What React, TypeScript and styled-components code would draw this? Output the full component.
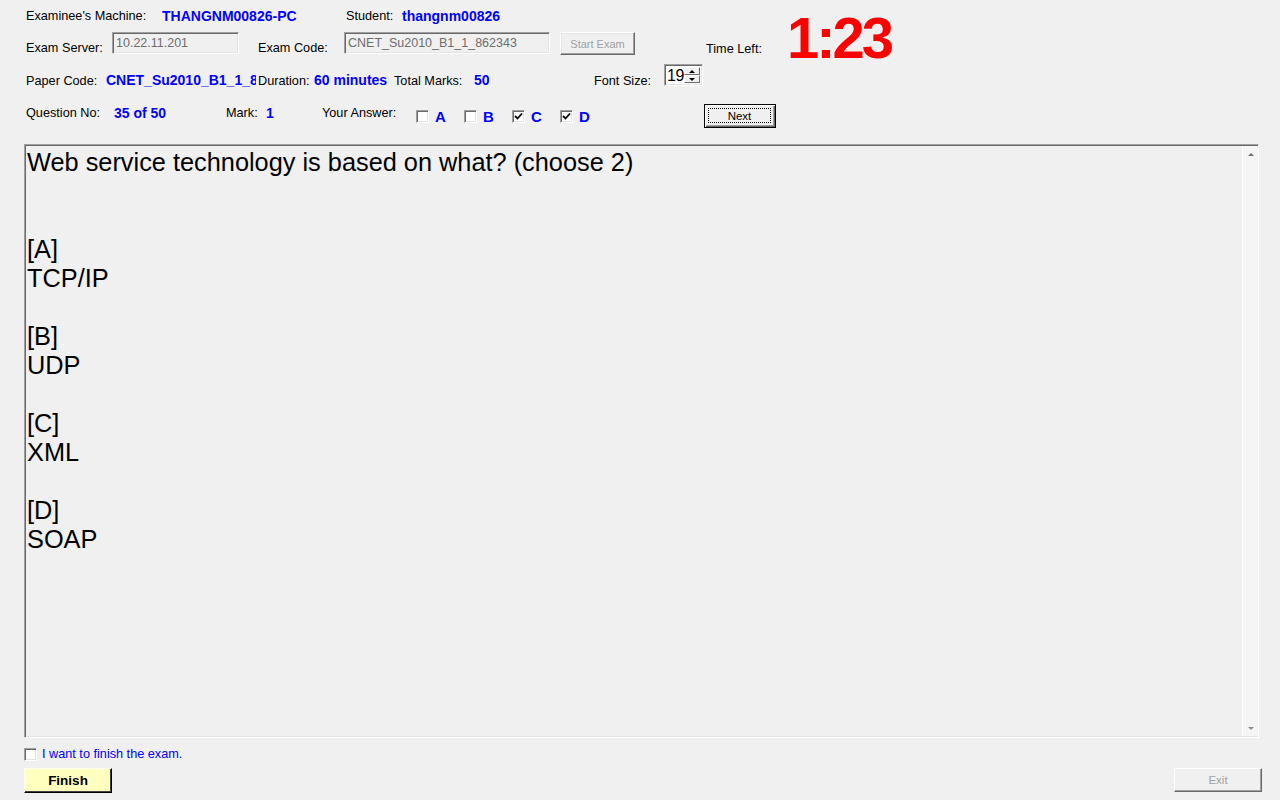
import React from "react";
import styled, { createGlobalStyle } from "styled-components";

const GlobalStyle = createGlobalStyle`
  html, body {
    margin: 0;
    padding: 0;
    background: #f0f0f0;
  }
  body {
    font-family: "Liberation Sans", Arial, sans-serif;
    color: #000;
  }
  * { box-sizing: border-box; }
`;

const Window = styled.div`
  width: 1280px;
  height: 800px;
  background: #f0f0f0;
  padding: 8px 18px 0 24px;
  display: flex;
  flex-direction: column;
  font-family: "Liberation Sans", Arial, sans-serif;
`;

const Header = styled.div`
  padding-left: 2px;
  display: flex;
  flex-direction: column;
`;

const TopSection = styled.div`
  display: flex;
  align-items: flex-start;
  height: 47px;
`;

const TopLeft = styled.div`
  width: 680px;
  display: flex;
  flex-direction: column;
  gap: 8px;
`;

const Row = styled.div<{ $h: number; $align?: string; $mt?: number }>`
  display: flex;
  align-items: ${(p) => p.$align || "center"};
  height: ${(p) => p.$h}px;
  margin-top: ${(p) => p.$mt || 0}px;
`;

const Label = styled.span<{ $w?: number; $ml?: number; $top?: boolean }>`
  flex: none;
  width: ${(p) => (p.$w ? `${p.$w}px` : "auto")};
  margin-left: ${(p) => p.$ml || 0}px;
  font-size: 12.7px;
  line-height: 14px;
  white-space: nowrap;
  color: #000;
  align-self: ${(p) => (p.$top ? "flex-start" : "auto")};
  padding-top: ${(p) => (p.$top ? 2 : 0)}px;
`;

const Value = styled.span<{ $w?: number; $top?: boolean }>`
  flex: none;
  width: ${(p) => (p.$w ? `${p.$w}px` : "auto")};
  font-size: 14px;
  line-height: 16px;
  font-weight: bold;
  color: #0000ff;
  white-space: nowrap;
  overflow: hidden;
  align-self: ${(p) => (p.$top ? "flex-start" : "auto")};
  padding-top: ${(p) => (p.$top ? 1 : 0)}px;
`;

const TextBox = styled.div<{ $w: number }>`
  flex: none;
  width: ${(p) => p.$w}px;
  height: 22px;
  margin-bottom: 1px;
  border: 1px solid;
  border-color: #a0a0a0 #ffffff #ffffff #a0a0a0;
  box-shadow: inset 1px 1px 0 #696969, inset -1px -1px 0 #e3e3e3;
  background: #f0f0f0;
  color: #6d6d6d;
  font-size: 12.5px;
  line-height: 18px;
  padding: 1px 0 0 3px;
  white-space: nowrap;
  overflow: hidden;
  align-self: flex-start;
`;

const DisabledButton = styled.div<{ $w: number; $ml?: number }>`
  flex: none;
  width: ${(p) => p.$w}px;
  height: 23px;
  margin-left: ${(p) => p.$ml || 0}px;
  border: 1px solid;
  border-color: #ffffff #696969 #696969 #ffffff;
  box-shadow: inset -1px -1px 0 #a0a0a0, inset 1px 1px 0 #e3e3e3;
  background: #f0f0f0;
  color: #a0a0a0;
  font-size: 11px;
  display: flex;
  align-items: center;
  justify-content: center;
  align-self: flex-start;
`;

const TimeLeft = styled.span`
  flex: none;
  width: 81px;
  margin-top: 34px;
  font-size: 12.7px;
  line-height: 14px;
`;

const Timer = styled.span`
  flex: none;
  font-size: 58px;
  line-height: 58px;
  font-weight: bold;
  letter-spacing: -3px;
  margin-top: 1px;
  color: #ff0000;
`;

const Spinner = styled.div`
  flex: none;
  width: 39px;
  height: 22px;
  display: flex;
  align-self: flex-start;
  border: 1px solid;
  border-color: #a0a0a0 #ffffff #ffffff #a0a0a0;
  box-shadow: inset 1px 1px 0 #696969, inset -1px -1px 0 #e3e3e3;
  background: #ffffff;
  padding: 2px 2px 2px 2px;
`;

const SpinText = styled.span`
  flex: 1;
  font-size: 16px;
  line-height: 18px;
  letter-spacing: -0.5px;
  color: #000;
`;

const SpinButtons = styled.div`
  width: 16px;
  display: flex;
  flex-direction: column;
`;

const SpinBtn = styled.div`
  flex: 1;
  background: #f0f0f0;
  border: 1px solid;
  border-color: #ffffff #696969 #696969 #ffffff;
  display: flex;
  align-items: center;
  justify-content: center;
`;

const Arrow = styled.span<{ $up?: boolean; $color?: string }>`
  width: 0;
  height: 0;
  border-left: 3px solid transparent;
  border-right: 3px solid transparent;
  ${(p) =>
    p.$up
      ? `border-bottom: 3px solid ${p.$color || "#000"};`
      : `border-top: 3px solid ${p.$color || "#000"};`}
`;

const Option = styled.div`
  flex: none;
  width: 48px;
  display: flex;
  align-items: center;
  gap: 6px;
`;

const CheckBox = styled.span`
  flex: none;
  width: 13px;
  height: 13px;
  border: 1px solid;
  border-color: #a0a0a0 #ffffff #ffffff #a0a0a0;
  box-shadow: inset 1px 1px 0 #696969, inset -1px -1px 0 #e3e3e3;
  background: #ffffff;
  display: flex;
  align-items: center;
  justify-content: center;
`;

const OptionLetter = styled.span`
  font-size: 15px;
  line-height: 16px;
  font-weight: bold;
  color: #0000ff;
  margin-top: 2px;
`;

const NextButton = styled.div`
  flex: none;
  width: 72px;
  height: 24px;
  margin-left: 96px;
  border: 1px solid #000;
  background: #f0f0f0;
  box-shadow: inset 1px 1px 0 #ffffff, inset -1px -1px 0 #696969,
    inset -2px -2px 0 #a0a0a0;
  padding: 3px 4px 4px 3px;
  display: flex;
  align-self: flex-start;
`;

const FocusRect = styled.span`
  flex: 1;
  border: 1px dotted #000;
  font-size: 11.5px;
  display: flex;
  align-items: center;
  justify-content: center;
`;

const QuestionBox = styled.div`
  margin-top: 16px;
  width: 1235px;
  height: 594px;
  flex: none;
  display: flex;
  border: 1px solid;
  border-color: #a0a0a0 #ffffff #ffffff #a0a0a0;
  box-shadow: inset 1px 1px 0 #696969, inset -1px -1px 0 #e3e3e3;
  padding: 1px 0 1px 1px;
`;

const QuestionText = styled.div`
  flex: 1;
  padding: 2px 0 0 1px;
  font-size: 25.33px;
  line-height: 29px;
  white-space: pre-line;
  color: #000;
`;

const ScrollBar = styled.div`
  width: 16px;
  flex: none;
  background: #f5f5f5;
  border-left: 1px solid #ffffff;
  display: flex;
  flex-direction: column;
  justify-content: space-between;
  align-items: center;
  padding: 7px 0 6px 1px;
`;

const FinishRow = styled.div`
  margin-top: 10px;
  height: 13px;
  display: flex;
  align-items: center;
  gap: 5px;
`;

const FinishLabel = styled.span`
  font-size: 12.7px;
  line-height: 13px;
  color: #0000ff;
`;

const BottomBar = styled.div`
  margin-top: 7px;
  display: flex;
  justify-content: space-between;
  align-items: flex-start;
`;

const FinishButton = styled.div`
  width: 88px;
  height: 25px;
  background: #ffffc0;
  border: 1px solid;
  border-color: #fffff0 #000000 #000000 #fffff0;
  box-shadow: inset -1px -1px 0 #404040;
  font-size: 13.5px;
  font-weight: bold;
  display: flex;
  align-items: center;
  justify-content: center;
`;

const ExitButton = styled.div`
  width: 88px;
  height: 24px;
  background: #f0f0f0;
  border: 1px solid;
  border-color: #ffffff #696969 #696969 #ffffff;
  box-shadow: inset -1px -1px 0 #a0a0a0;
  color: #a0a0a0;
  font-size: 11.5px;
  display: flex;
  align-items: center;
  justify-content: center;
`;

const Check = () => (
  <svg width="9" height="9" viewBox="0 0 9 9">
    <polyline
      points="1,4 3.5,6.5 8,1.5"
      fill="none"
      stroke="#000"
      strokeWidth="1.8"
    />
  </svg>
);

const options: { letter: string; checked: boolean }[] = [
  { letter: "A", checked: false },
  { letter: "B", checked: false },
  { letter: "C", checked: true },
  { letter: "D", checked: true },
];

const question =
  "Web service technology is based on what? (choose 2)\n\u00a0\n\u00a0\n[A]\nTCP/IP\n\u00a0\n[B]\nUDP\n\u00a0\n[C]\nXML\n\u00a0\n[D]\nSOAP";

export default function App() {
  return (
    <>
      <GlobalStyle />
      <Window>
        <Header>
          <TopSection>
            <TopLeft>
              <Row $h={16}>
                <Label $w={136}>Examinee's Machine:</Label>
                <Value $w={184}>THANGNM00826-PC</Value>
                <Label $w={56}>Student:</Label>
                <Value>thangnm00826</Value>
              </Row>
              <Row $h={23} $align="flex-end">
                <Label $w={86}>Exam Server:</Label>
                <TextBox $w={127}>10.22.11.201</TextBox>
                <Label $w={86} $ml={19}>
                  Exam Code:
                </Label>
                <TextBox $w={206}>CNET_Su2010_B1_1_862343</TextBox>
                <DisabledButton $w={75} $ml={10}>
                  Start Exam
                </DisabledButton>
              </Row>
            </TopLeft>
            <TimeLeft>Time Left:</TimeLeft>
            <Timer>1:23</Timer>
          </TopSection>
          <Row $h={24} $align="flex-end" $mt={9}>
            <Label $w={80}>Paper Code:</Label>
            <Value $w={150}>CNET_Su2010_B1_1_862343</Value>
            <Label $w={56} $ml={2}>
              Duration:
            </Label>
            <Value $w={80}>60 minutes</Value>
            <Label $w={80}>Total Marks:</Label>
            <Value $w={120}>50</Value>
            <Label $w={70}>Font Size:</Label>
            <Spinner>
              <SpinText>19</SpinText>
              <SpinButtons>
                <SpinBtn>
                  <Arrow $up />
                </SpinBtn>
                <SpinBtn>
                  <Arrow />
                </SpinBtn>
              </SpinButtons>
            </Spinner>
          </Row>
          <Row $h={24} $mt={16}>
            <Label $w={88} $top>
              Question No:
            </Label>
            <Value $w={112} $top>
              35 of 50
            </Value>
            <Label $w={40} $top>
              Mark:
            </Label>
            <Value $w={56} $top>
              1
            </Value>
            <Label $w={94} $top>
              Your Answer:
            </Label>
            {options.map((o) => (
              <Option key={o.letter}>
                <CheckBox>{o.checked && <Check />}</CheckBox>
                <OptionLetter>{o.letter}</OptionLetter>
              </Option>
            ))}
            <NextButton>
              <FocusRect>Next</FocusRect>
            </NextButton>
          </Row>
        </Header>

        <QuestionBox>
          <QuestionText>{question}</QuestionText>
          <ScrollBar>
            <Arrow $up $color="#707070" />
            <Arrow $color="#909090" />
          </ScrollBar>
        </QuestionBox>

        <FinishRow>
          <CheckBox />
          <FinishLabel>I want to finish the exam.</FinishLabel>
        </FinishRow>

        <BottomBar>
          <FinishButton>Finish</FinishButton>
          <ExitButton>Exit</ExitButton>
        </BottomBar>
      </Window>
    </>
  );
}
